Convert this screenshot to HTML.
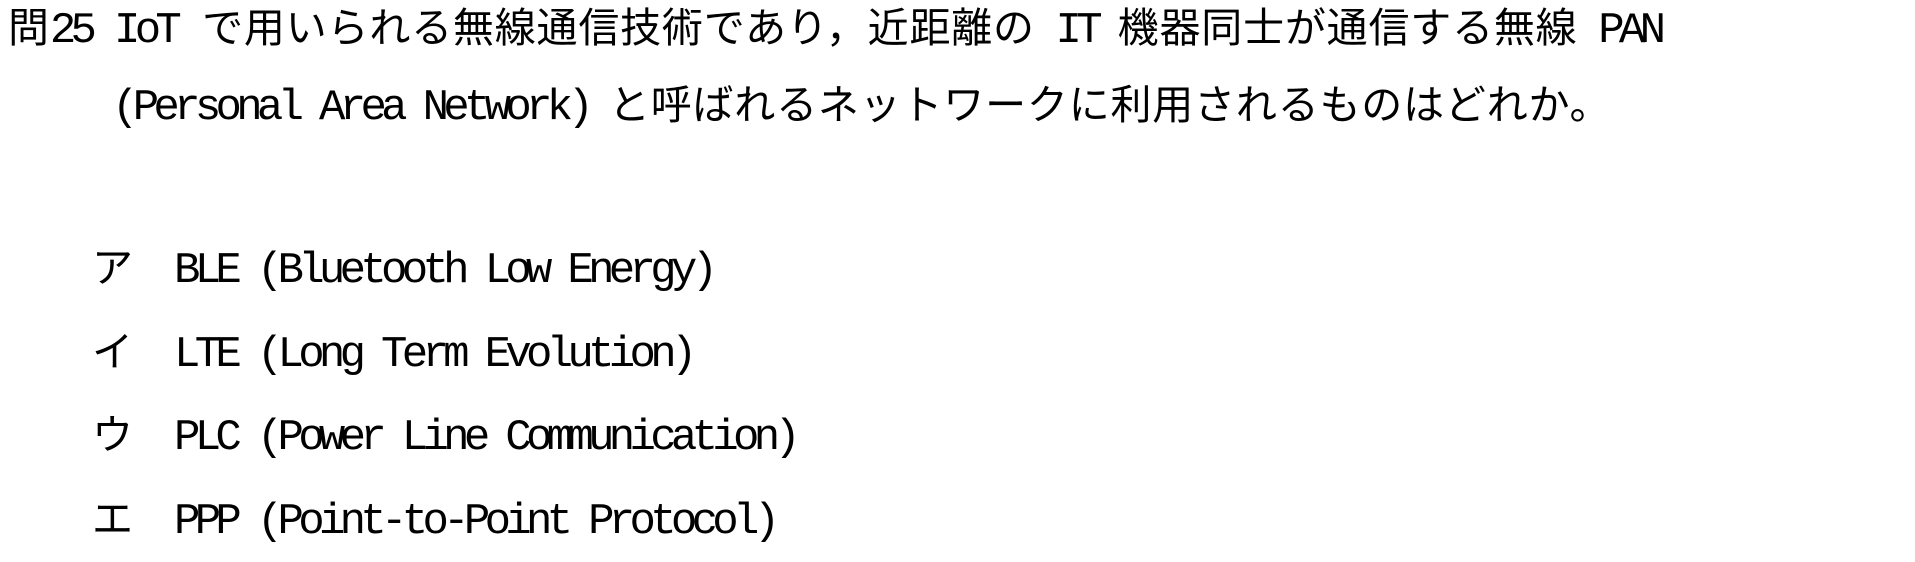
<!DOCTYPE html>
<html><head><meta charset="utf-8"><style>
body{margin:0;width:1915px;height:562px;background:#fff;overflow:hidden;position:relative;color:#000;}
.l{position:absolute;white-space:pre;font-size:41px;line-height:41px;font-family:"Noto Sans CJK JP",sans-serif;letter-spacing:0.8px;}
.m{font-family:"Liberation Mono",monospace;letter-spacing:-5.7px;font-size:44px;}
</style></head><body>
<div class="l" style="left:8px;top:4px">問<span class="m">25</span></div>
<div class="l" style="left:114px;top:4px"><span class="m">IoT</span><span style="display:inline-block;width:26px"></span>で用いられる無線通信技術であり，近距離の<span class="m"> IT </span>機器同士が通信する無線<span class="m"> PAN</span></div>
<div class="l" style="left:112px;top:81px"><span class="m">(Personal Area Network) </span>と呼ばれるネットワークに利用されるものはどれか。</div>
<div class="l" style="left:92px;top:244px">ア</div><div class="l" style="left:174px;top:244px"><span class="m">BLE (Bluetooth Low Energy)</span></div>
<div class="l" style="left:92px;top:328px">イ</div><div class="l" style="left:174px;top:328px"><span class="m">LTE (Long Term Evolution)</span></div>
<div class="l" style="left:92px;top:411px">ウ</div><div class="l" style="left:174px;top:411px"><span class="m">PLC (Power Line Communication)</span></div>
<div class="l" style="left:92px;top:495px">エ</div><div class="l" style="left:174px;top:495px"><span class="m">PPP (Point-to-Point Protocol)</span></div>
</body></html>
